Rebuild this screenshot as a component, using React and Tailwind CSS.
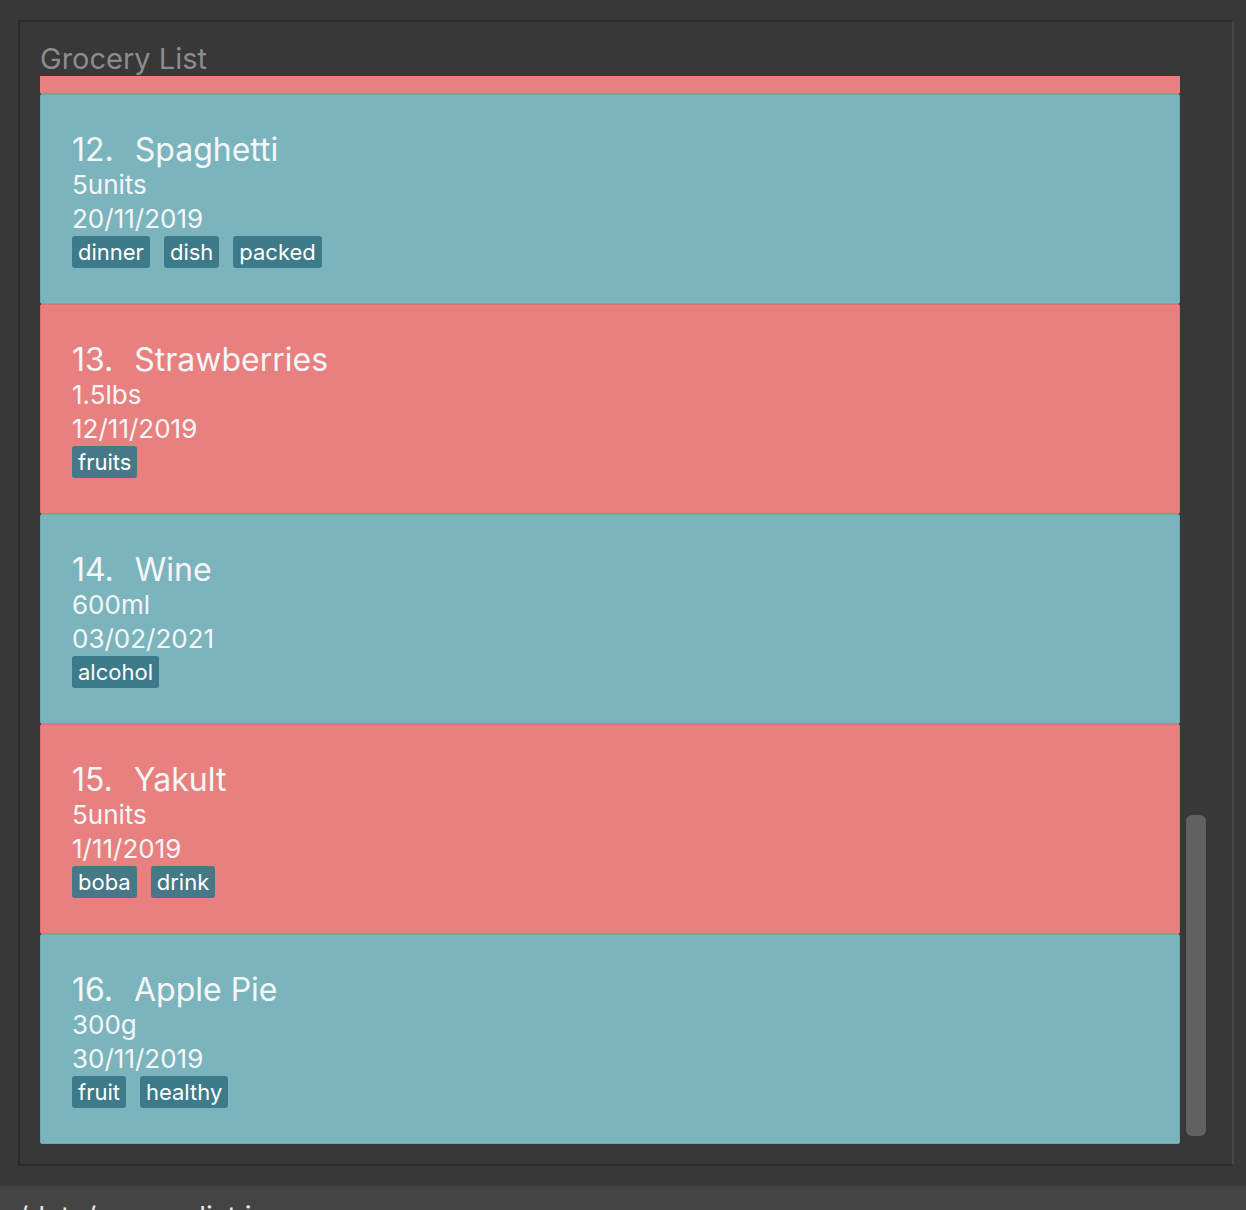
const items = [
  { id: 12, name: 'Spaghetti', amount: '5units', date: '20/11/2019', tags: ['dinner', 'dish', 'packed'], color: 'teal' },
  { id: 13, name: 'Strawberries', amount: '1.5lbs', date: '12/11/2019', tags: ['fruits'], color: 'red' },
  { id: 14, name: 'Wine', amount: '600ml', date: '03/02/2021', tags: ['alcohol'], color: 'teal' },
  { id: 15, name: 'Yakult', amount: '5units', date: '1/11/2019', tags: ['boba', 'drink'], color: 'red' },
  { id: 16, name: 'Apple Pie', amount: '300g', date: '30/11/2019', tags: ['fruit', 'healthy'], color: 'teal' },
];

function GroceryCard({ item }) {
  const bg =
    item.color === 'red'
      ? 'bg-[#e7807e] border-[#d87573]'
      : 'bg-[#7cb4bd] border-[#70a8b1]';
  const tagBg = item.color === 'red' ? 'bg-[#467888]' : 'bg-[#3d7a8a]';

  return (
    <div className={`h-[210px] shrink-0 border rounded-[2px] pl-[31px] pt-[37px] ${bg}`}>
      {/* 번호 + 이름 */}
      <div className="flex gap-[21px] text-[32px] leading-[36px] text-[#f4f7f8]">
        <span>{item.id}.</span>
        <span>{item.name}</span>
      </div>
      <div className="text-[26px] leading-[34px] text-[#f4f7f8]">{item.amount}</div>
      <div className="text-[26px] leading-[34px] text-[#f4f7f8]">{item.date}</div>
      <div className="flex gap-[14px]">
        {item.tags.map((t) => (
          <span
            key={t}
            className={`h-[32px] px-[6px] rounded-[3px] text-[22px] leading-[32px] text-white ${tagBg}`}
          >
            {t}
          </span>
        ))}
      </div>
    </div>
  );
}

export default function App() {
  return (
    <div
      className="w-[1246px] h-[1210px] overflow-hidden bg-[#383838] pt-[20px]"
      style={{ fontFamily: 'Inter, Lato, sans-serif' }}
    >
      {/* Panel */}
      <div className="ml-[18px] w-[1216px] h-[1146px] border-2 border-t-[#2a2a2a] border-l-[#2a2a2a] border-b-[#2a2a2a] border-r-[#474747] bg-[#383838] flex flex-col">
        <div className="pl-[20px] pt-[20px] h-[54px] text-[29px] leading-[34px] text-[#8c8c8c]">
          Grocery List
        </div>
        <div className="flex pl-[20px] h-[1068px]">
          {/* List, scrolled down */}
          <div className="w-[1140px] h-full overflow-hidden flex flex-col">
            <div className="h-[18px] shrink-0 bg-[#e7807e] border-b border-[#d87573] rounded-b-[2px]" />
            {items.map((item) => (
              <GroceryCard key={item.id} item={item} />
            ))}
          </div>
          {/* Scrollbar */}
          <div className="w-[32px] h-full flex flex-col justify-end pb-[8px] pl-[6px]">
            <div className="w-[20px] h-[321px] rounded-[6px] bg-[#616161]" />
          </div>
        </div>
      </div>

      {/* Status bar */}
      <div className="mt-[20px] h-[24px] bg-[#444444] pl-[18px] pt-[14px] text-[28px] leading-[34px] text-[#e6e6e6] overflow-hidden">
        /data/grocerylist.json
      </div>
    </div>
  );
}
